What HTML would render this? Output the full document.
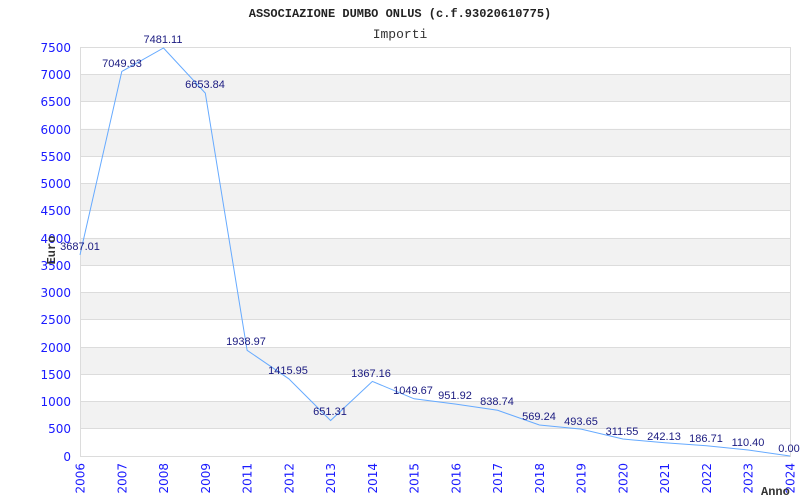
<!DOCTYPE html>
<html><head><meta charset="utf-8"><style>
html,body{margin:0;padding:0;background:#fff;width:800px;height:500px;overflow:hidden}
svg{display:block}
</style></head><body>
<svg width="800" height="500" xmlns="http://www.w3.org/2000/svg">
<rect width="800" height="500" fill="#fff"/>
<g fill="#f2f2f2">
<rect x="80.5" y="401.5" width="710" height="27.3"/>
<rect x="80.5" y="347" width="710" height="27.3"/>
<rect x="80.5" y="292.4" width="710" height="27.3"/>
<rect x="80.5" y="237.9" width="710" height="27.3"/>
<rect x="80.5" y="183.3" width="710" height="27.3"/>
<rect x="80.5" y="128.8" width="710" height="27.3"/>
<rect x="80.5" y="74.3" width="710" height="27.3"/>
</g>
<g stroke="#dcdcdc" stroke-width="1">
<line x1="80" y1="47.5" x2="790" y2="47.5"/>
<line x1="80" y1="74.5" x2="790" y2="74.5"/>
<line x1="80" y1="101.5" x2="790" y2="101.5"/>
<line x1="80" y1="129.5" x2="790" y2="129.5"/>
<line x1="80" y1="156.5" x2="790" y2="156.5"/>
<line x1="80" y1="183.5" x2="790" y2="183.5"/>
<line x1="80" y1="210.5" x2="790" y2="210.5"/>
<line x1="80" y1="238.5" x2="790" y2="238.5"/>
<line x1="80" y1="265.5" x2="790" y2="265.5"/>
<line x1="80" y1="292.5" x2="790" y2="292.5"/>
<line x1="80" y1="319.5" x2="790" y2="319.5"/>
<line x1="80" y1="347.5" x2="790" y2="347.5"/>
<line x1="80" y1="374.5" x2="790" y2="374.5"/>
<line x1="80" y1="401.5" x2="790" y2="401.5"/>
<line x1="80" y1="428.5" x2="790" y2="428.5"/>
<line x1="80" y1="456.5" x2="790" y2="456.5"/>
<line x1="80.5" y1="47" x2="80.5" y2="457"/>
<line x1="790.5" y1="47" x2="790.5" y2="457"/>
</g>
<text x="400" y="17" text-anchor="middle" font-family="Liberation Mono, monospace" font-weight="bold" font-size="12" fill="#222">ASSOCIAZIONE DUMBO ONLUS (c.f.93020610775)</text>
<text x="400" y="38" text-anchor="middle" font-family="Liberation Mono, monospace" font-size="13" fill="#333">Importi</text>
<g font-family="DejaVu Sans, sans-serif" font-size="12" fill="#1a1aff" text-anchor="end">
<text x="71" y="52">7500</text><text x="71" y="79">7000</text><text x="71" y="106">6500</text>
<text x="71" y="134">6000</text><text x="71" y="161">5500</text><text x="71" y="188">5000</text>
<text x="71" y="215">4500</text><text x="71" y="243">4000</text><text x="71" y="270">3500</text>
<text x="71" y="297">3000</text><text x="71" y="324">2500</text><text x="71" y="352">2000</text>
<text x="71" y="379">1500</text><text x="71" y="406">1000</text><text x="71" y="433">500</text>
<text x="71" y="461">0</text>
</g>
<g font-family="DejaVu Sans, sans-serif" font-size="12" fill="#1a1aff" text-anchor="end">
<text transform="translate(84.5,463) rotate(-90)">2006</text>
<text transform="translate(126.3,463) rotate(-90)">2007</text>
<text transform="translate(168,463) rotate(-90)">2008</text>
<text transform="translate(209.8,463) rotate(-90)">2009</text>
<text transform="translate(251.6,463) rotate(-90)">2011</text>
<text transform="translate(293.3,463) rotate(-90)">2012</text>
<text transform="translate(335.1,463) rotate(-90)">2013</text>
<text transform="translate(376.9,463) rotate(-90)">2014</text>
<text transform="translate(418.6,463) rotate(-90)">2015</text>
<text transform="translate(460.4,463) rotate(-90)">2016</text>
<text transform="translate(502.1,463) rotate(-90)">2017</text>
<text transform="translate(543.9,463) rotate(-90)">2018</text>
<text transform="translate(585.7,463) rotate(-90)">2019</text>
<text transform="translate(627.4,463) rotate(-90)">2020</text>
<text transform="translate(669.2,463) rotate(-90)">2021</text>
<text transform="translate(711,463) rotate(-90)">2022</text>
<text transform="translate(752.7,463) rotate(-90)">2023</text>
<text transform="translate(794.5,463) rotate(-90)">2024</text>
</g>
<text x="761" y="495" font-family="Liberation Mono, monospace" font-weight="bold" font-size="12" fill="#333">Anno</text>
<text transform="translate(55,250) rotate(-90)" text-anchor="middle" font-family="Liberation Mono, monospace" font-weight="bold" font-size="12" fill="#333">Euro</text>
<polyline fill="none" stroke="#66aaff" stroke-width="1" points="80,254.9 121.8,71.5 163.5,48 205.3,93.1 247.1,350.3 288.8,378.8 330.6,420.5 372.4,381.4 414.1,398.8 455.9,404.1 497.6,410.3 539.4,425 581.2,429.1 622.9,439 664.7,442.8 706.5,445.8 748.2,450 790,456"/>
<g font-family="Liberation Sans, Arial, sans-serif" font-size="11" fill="#1a1a80" text-anchor="middle">
<text x="80" y="250">3687.01</text>
<text x="122" y="67">7049.93</text>
<text x="163" y="43">7481.11</text>
<text x="205" y="88">6653.84</text>
<text x="246" y="345">1938.97</text>
<text x="288" y="374">1415.95</text>
<text x="330" y="415">651.31</text>
<text x="371" y="377">1367.16</text>
<text x="413" y="394">1049.67</text>
<text x="455" y="399">951.92</text>
<text x="497" y="405">838.74</text>
<text x="539" y="420">569.24</text>
<text x="581" y="425">493.65</text>
<text x="622" y="435">311.55</text>
<text x="664" y="440">242.13</text>
<text x="706" y="442">186.71</text>
<text x="748" y="446">110.40</text>
<text x="789" y="452">0.00</text>
</g>
</svg>
</body></html>
